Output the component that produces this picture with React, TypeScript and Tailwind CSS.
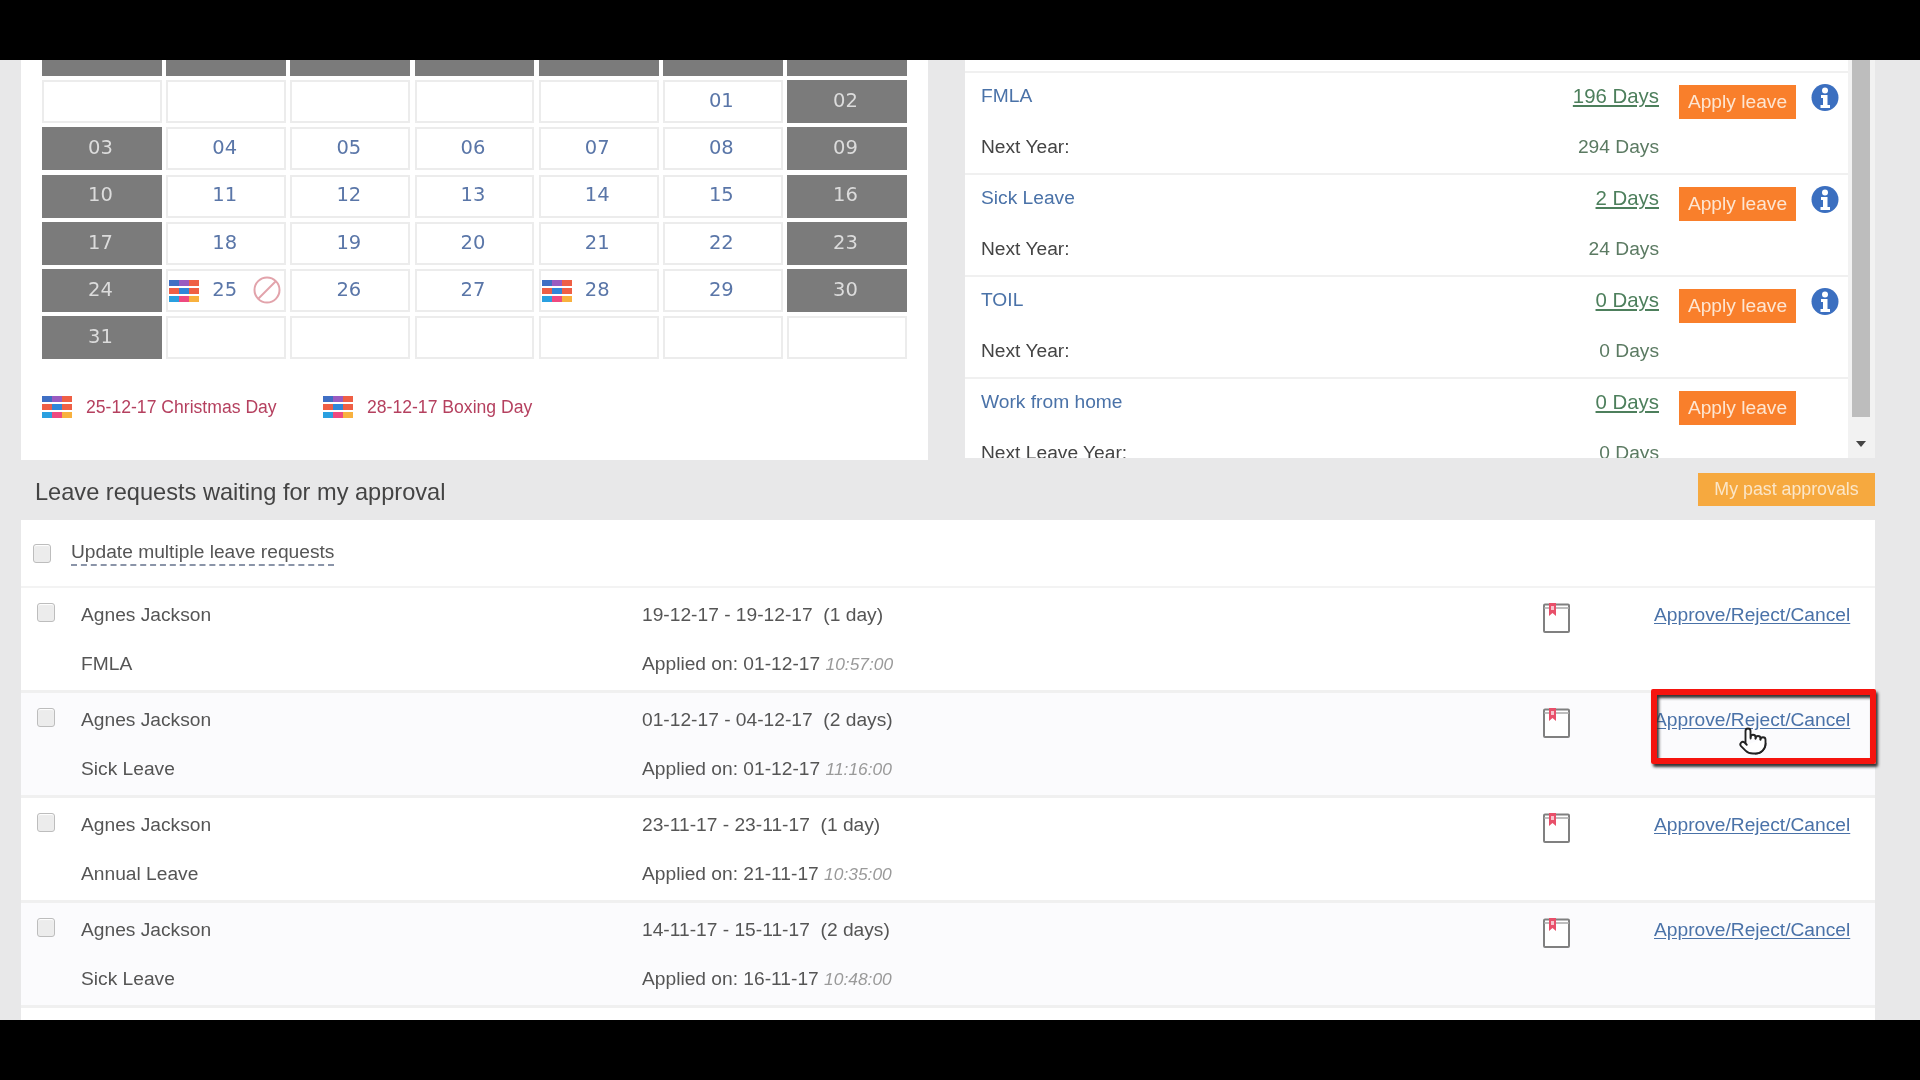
import React from "react";
import { Pointer } from "lucide-react";

const days = [
  "", "", "", "", "", "01", "02",
  "03", "04", "05", "06", "07", "08", "09",
  "10", "11", "12", "13", "14", "15", "16",
  "17", "18", "19", "20", "21", "22", "23",
  "24", "25", "26", "27", "28", "29", "30",
  "31", "", "", "", "", "", "",
];

const balances = [
  { name: "FMLA", days: "196 Days", next: "294 Days", label: "Next Year:", info: true },
  { name: "Sick Leave", days: "2 Days", next: "24 Days", label: "Next Year:", info: true },
  { name: "TOIL", days: "0 Days", next: "0 Days", label: "Next Year:", info: true },
  { name: "Work from home", days: "0 Days", next: "0 Days", label: "Next Leave Year:", info: false },
];

const requests = [
  { type: "FMLA", range: "19-12-17 - 19-12-17", len: "(1 day)", applied: "01-12-17", time: "10:57:00" },
  { type: "Sick Leave", range: "01-12-17 - 04-12-17", len: "(2 days)", applied: "01-12-17", time: "11:16:00", tint: true, active: true },
  { type: "Annual Leave", range: "23-11-17 - 23-11-17", len: "(1 day)", applied: "21-11-17", time: "10:35:00" },
  { type: "Sick Leave", range: "14-11-17 - 15-11-17", len: "(2 days)", applied: "16-11-17", time: "10:48:00", tint: true },
];

const FlagIcon = () => (
  <svg width="30" height="22" viewBox="0 0 30 22" className="shrink-0">
    <rect x="0" y="0" width="10" height="6" fill="#3f6fc4" />
    <rect x="10" y="0" width="10" height="6" fill="#9a5bc0" />
    <rect x="20" y="0" width="10" height="6" fill="#ef5f45" />
    <rect x="0" y="8" width="10" height="6" fill="#ef5f45" />
    <rect x="10" y="8" width="10" height="6" fill="#2f86d8" />
    <rect x="20" y="8" width="10" height="6" fill="#ef5f45" />
    <rect x="0" y="16" width="10" height="6" fill="#2aa0e0" />
    <rect x="10" y="16" width="10" height="6" fill="#ee4a80" />
    <rect x="20" y="16" width="10" height="6" fill="#f8b13e" />
  </svg>
);

const BanIcon = () => (
  <svg width="28" height="28" viewBox="0 0 28 28" fill="none" stroke="#e2a3ab" strokeWidth="2">
    <circle cx="14" cy="14" r="12.5" />
    <path d="M23 5 5 23" />
  </svg>
);

const InfoIcon = () => (
  <svg width="28" height="27" viewBox="0 0 28 27" className="shrink-0">
    <circle cx="14" cy="13.5" r="13.5" fill="#3b6fc0" />
    <circle cx="14" cy="6.5" r="3" fill="#fff" />
    <path d="M10 11h6.5v10H19v3H9.5v-3H12v-7h-2z" fill="#fff" />
  </svg>
);

const BookIcon = () => (
  <svg width="27" height="30" viewBox="0 0 27 30" fill="none">
    <rect x="1" y="1.500" width="25" height="27.500" rx="1" fill="#fff" stroke="#808080" strokeWidth="2" />
    <path d="M1 5h25" stroke="#a8a8a8" strokeWidth="1.500" />
    <path d="M6 0h7v13l-3.500-3L6 13z" fill="#e8506a" />
    <path d="M8 3h3v4H8z" fill="#f6c3cc" />
  </svg>
);

const Checkbox = () => (
  <input
    type="checkbox"
    className="appearance-none w-[18px] h-[19px] rounded-[3px] border border-[#bdbdbd] bg-[#ececec] shadow-[inset_0_1px_1px_#fff]"
  />
);

const Calendar = () => (
  <div className="w-[907px] h-[400px] bg-white px-[21px] flex flex-col">
    <div className="grid grid-cols-7 gap-x-[4.200px] h-[16px]">
      {[0, 1, 2, 3, 4, 5, 6].map((col) => (
        <div key={col} className="bg-[#7b7b7b]" />
      ))}
    </div>
    <div className="grid grid-cols-7 gap-x-[4.200px] gap-y-[4.300px] auto-rows-[43px] mt-[4px] font-['DejaVu_Sans',sans-serif] text-[19.500px]">
      {days.map((day, i) => {
        const weekend = day !== "" && (i % 7 === 0 || i % 7 === 6);
        if (weekend) {
          return (
            <div key={i} className="bg-[#7b7b7b] text-[#dcdcdc] flex items-center justify-center pr-[3px] pb-[2px]">
              {day}
            </div>
          );
        }
        return (
          <div key={i} className="border-2 border-[#ececec] text-[#5a76a8] grid grid-cols-[1fr_auto_1fr] items-center">
            <div className="pl-[1px]">{(day === "25" || day === "28") && <FlagIcon />}</div>
            <span className="mr-[3px] mb-[2px]">{day}</span>
            <div className="flex justify-end pr-[3px] mb-[2px]">{day === "25" && <BanIcon />}</div>
          </div>
        );
      })}
    </div>
    <div className="flex items-center mt-[36px] text-[17.600px] text-[#b5405f] h-[24px]">
      <FlagIcon />
      <span className="ml-[14px] w-[237px]">25-12-17 Christmas Day</span>
      <FlagIcon />
      <span className="ml-[14px]">28-12-17 Boxing Day</span>
    </div>
  </div>
);

const Balances = () => (
  <div className="w-[910px] h-[398px] bg-white flex overflow-hidden ml-[37px]">
    <div className="w-[883px] pt-[11px]">
      {balances.map((b) => (
        <div key={b.name} className="h-[102px] border-t-2 border-[#f0f0f0] pl-[16px] pr-[9px] grid grid-cols-[1fr_auto_117px_28px] gap-x-[15px] grid-rows-[51px_51px] text-[19.200px]">
          <a className="text-[#4a72a8] mt-[9px] leading-[28px]">{b.name}</a>
          <a className="text-[#4d7f5c] underline underline-offset-2 mt-[9px] mr-[5px] leading-[28px] text-right text-[20.400px]">{b.days}</a>
          <button className="h-[34px] mt-[12px] bg-[#f97f2b] text-[#fde6d2]">Apply leave</button>
          <div className="mt-[11px]">{b.info && <InfoIcon />}</div>
          <div className="text-[#444444] mt-[9px] leading-[28px]">{b.label}</div>
          <div className="text-[#5b7a62] mt-[9px] mr-[5px] leading-[28px] text-right">{b.next}</div>
        </div>
      ))}
    </div>
    <div className="w-[27px] bg-[#f2f2f2] flex flex-col items-center pl-[4px] pr-[5px] pb-[11px]">
      <div className="w-full h-[357px] bg-[#bdbdbd]" />
      <div className="mt-auto w-0 h-0 border-x-[5px] border-x-transparent border-t-[6px] border-t-[#444]" />
    </div>
  </div>
);

const RequestRow = ({ r }: { r: (typeof requests)[number] }) => (
  <div className={`relative h-[105px] border-b-[3px] border-[#f0f0f0] pl-[16px] pr-[24px] pt-[14px] grid grid-cols-[44px_561px_1fr_111px_197px] grid-rows-[26px_26px] gap-y-[23px] leading-[26px] text-[#555555] ${r.tint ? "bg-[#fbfbfd]" : "bg-white"}`}>
    <div className="mt-[1px] h-[19px] flex"><Checkbox /></div>
    <div>Agnes Jackson</div>
    <div className="whitespace-pre">{r.range}  {r.len}</div>
    <div className="row-span-2 mt-[1px]"><BookIcon /></div>
    <a className="text-[#4a72a8] underline underline-offset-2 whitespace-nowrap">Approve/Reject/Cancel</a>
    <div />
    <div>{r.type}</div>
    <div className="whitespace-nowrap">
      Applied on: {r.applied} <i className="text-[#9a9a9a] text-[17.400px]">{r.time}</i>
    </div>
    {r.active && (
      <>
        <div className="absolute left-[1630px] top-[-4px] w-[225px] h-[75px] border-[6px] border-[#f5140e] rounded-[2px] shadow-[2px_3px_3px_#333,inset_2px_3px_3px_#333]" />
        <Pointer className="absolute left-[1717px] top-[30px] w-[30px] h-[36px]" fill="#ffffff" stroke="#222222" strokeWidth={1.5} />
      </>
    )}
  </div>
);

export default function App() {
  return (
    <div className="w-[1920px] h-[1080px] overflow-hidden bg-black flex flex-col font-['Liberation_Sans',Arial,sans-serif] text-[19.200px]">
      <div className="h-[60px] shrink-0 bg-black" />
      <div className="h-[960px] shrink-0 bg-[#e8e8e9] overflow-hidden pl-[21px] blur-[0.5px]">
        <div className="flex h-[400px]">
          <Calendar />
          <Balances />
        </div>
        <div className="w-[1854px] h-[60px] pl-[14px] flex items-center justify-between">
          <h2 className="text-[23.600px] text-[#444444] font-normal mt-[6px]">Leave requests waiting for my approval</h2>
          <button className="w-[177px] h-[33px] mt-[-1px] bg-[#f6a93f] text-[#fbe6c8] text-[17.800px]">My past approvals</button>
        </div>
        <div className="w-[1854px] bg-white h-[500px]">
          <div className="h-[68px] border-b-2 border-[#f3f3f3] pl-[12px] flex items-center gap-[20px]">
            <Checkbox />
            <span className="text-[#555555] border-b-2 border-dashed border-[#8a94a8] leading-[24px]">Update multiple leave requests</span>
          </div>
          {requests.map((r, i) => (
            <RequestRow key={i} r={r} />
          ))}
        </div>
      </div>
      <div className="flex-1 bg-black" />
    </div>
  );
}
